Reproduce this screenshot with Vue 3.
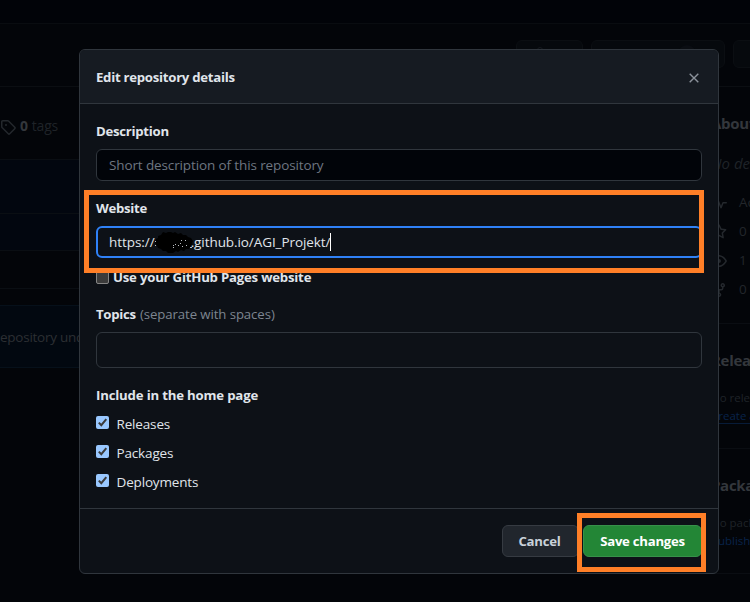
<script setup>
import { ref } from 'vue'

const options = ref(['Releases', 'Packages', 'Deployments'])
const stats = [
  { label: 'Activity', icon: 'M6 2c.306 0 .582.187.696.471L10 10.731l1.304-3.26A.751.751 0 0 1 12 7h3.25a.75.75 0 0 1 0 1.5h-2.742l-1.812 4.528a.751.751 0 0 1-1.392 0L6 4.77 4.696 8.03A.75.75 0 0 1 4 8.5H.75a.75.75 0 0 1 0-1.5h2.742l1.812-4.529A.751.751 0 0 1 6 2Z' },
  { label: '0 stars', icon: 'M8 .25a.75.75 0 0 1 .673.418l1.882 3.815 4.21.612a.75.75 0 0 1 .416 1.279l-3.046 2.97.719 4.192a.751.751 0 0 1-1.088.791L8 12.347l-3.766 1.98a.75.75 0 0 1-1.088-.79l.72-4.194L.818 6.374a.75.75 0 0 1 .416-1.28l4.21-.611L7.327.668A.75.75 0 0 1 8 .25Zm0 2.445L6.615 5.5a.75.75 0 0 1-.564.41l-3.097.45 2.24 2.184a.75.75 0 0 1 .216.664l-.528 3.084 2.769-1.456a.75.75 0 0 1 .698 0l2.77 1.456-.53-3.084a.75.75 0 0 1 .216-.664l2.24-2.183-3.096-.45a.75.75 0 0 1-.564-.41L8 2.694Z' },
  { label: '1 watching', icon: 'M8 2c1.981 0 3.671.992 4.933 2.078 1.27 1.091 2.187 2.345 2.637 3.023a1.62 1.62 0 0 1 0 1.798c-.45.678-1.367 1.932-2.637 3.023C11.67 13.008 9.981 14 8 14s-3.671-.992-4.933-2.078C1.797 10.83.88 9.576.43 8.898a1.62 1.62 0 0 1 0-1.798c.45-.677 1.367-1.931 2.637-3.022C4.33 2.992 6.019 2 8 2ZM1.679 7.932a.12.12 0 0 0 0 .136c.411.622 1.241 1.75 2.366 2.717C5.176 11.758 6.527 12.5 8 12.5s2.825-.742 3.955-1.715c1.124-.967 1.954-2.096 2.366-2.717a.12.12 0 0 0 0-.136c-.412-.621-1.242-1.75-2.366-2.717C10.824 4.242 9.473 3.5 8 3.5s-2.824.742-3.955 1.715c-1.124.967-1.954 2.096-2.366 2.717ZM8 10a2 2 0 1 1 0-4 2 2 0 0 1 0 4Z' },
  { label: '0 forks', icon: 'M5 5.372v.878c0 .414.336.75.75.75h4.5a.75.75 0 0 0 .75-.75v-.878a2.25 2.25 0 1 1 1.5 0v.878a2.25 2.25 0 0 1-2.25 2.25h-1.5v2.128a2.251 2.251 0 1 1-1.5 0V8.5h-1.5A2.25 2.25 0 0 1 3.5 6.25v-.878a2.25 2.25 0 1 1 1.5 0ZM5 3.25a.75.75 0 1 0-1.5 0 .75.75 0 0 0 1.5 0Zm6.75.75a.75.75 0 1 0 0-1.5.75.75 0 0 0 0 1.5Zm-3 8.75a.75.75 0 1 0-1.5 0 .75.75 0 0 0 1.5 0Z' },
]
</script>

<template>
  <div class="screen">
    <div class="page">
      <div class="topbar"></div>
      <div class="repo-head">
        <span class="pill pin"><svg width="16" height="16" viewBox="0 0 16 16"><circle cx="8" cy="3" r="2.5" /><path d="M8 6v8" /></svg></span>
        <span class="pill watch"><svg width="16" height="16" viewBox="0 0 16 16"><path d="M1 8c4-7 10-7 14 0-4 7-10 7-14 0z" /></svg><i class="count"></i></span>
        <span class="pill fork"><svg width="16" height="16" viewBox="0 0 16 16"><path :d="stats[3].icon" class="solid" /></svg></span>
      </div>
      <div class="columns">
        <div class="files">
          <div class="tags">
            <svg width="16" height="16" viewBox="0 0 16 16"><path class="solid" d="M1 7.775V2.75C1 1.784 1.784 1 2.75 1h5.025c.464 0 .91.184 1.238.513l6.25 6.25a1.75 1.75 0 0 1 0 2.474l-5.026 5.026a1.75 1.75 0 0 1-2.474 0l-6.25-6.25A1.752 1.752 0 0 1 1 7.775Zm1.5 0c0 .066.026.13.073.177l6.25 6.25a.25.25 0 0 0 .354 0l5.025-5.025a.25.25 0 0 0 0-.354l-6.25-6.25a.25.25 0 0 0-.177-.073H2.75a.25.25 0 0 0-.25.25ZM6 5a1 1 0 1 1 0 2 1 1 0 0 1 0-2Z" /></svg>
            <b>0</b><span>tags</span>
          </div>
          <div class="row commit"></div>
          <div class="row second"></div>
          <div class="row third"></div>
          <div class="row gap"></div>
          <div class="row notice">epository understand</div>
        </div>
        <aside class="side">
          <section class="about">
            <h2>About</h2>
            <p class="none">No description</p>
            <div v-for="s in stats" :key="s.label" class="stat">
              <svg width="16" height="16" viewBox="0 0 16 16"><path class="solid" :d="s.icon" /></svg><span>{{ s.label }}</span>
            </div>
          </section>
          <section class="releases">
            <h2>Releases</h2>
            <p>No releases</p>
            <a class="under">Create a new</a>
          </section>
          <section class="packages">
            <h2>Packages</h2>
            <p>No packages</p>
            <a>Publish your</a>
          </section>
        </aside>
      </div>
    </div>

    <div class="modal">
      <header class="modal-head">
        <h1>Edit repository details</h1>
        <svg width="10" height="10" viewBox="0 0 10 10"><path d="M.7.7l8.6 8.6M9.3.7L.7 9.3" /></svg>
      </header>
      <div class="modal-body">
        <div class="label">Description</div>
        <div class="input desc"><span>Short description of this repository</span></div>
        <div class="label l-web">Website</div>
        <div class="input url">
          <span class="t-http">https://</span>
          <svg class="scribble" width="38" height="22" viewBox="0 0 38 22">
            <path d="M0 12l1-4 2-1 0-2 3-1 2-3 3 1 2-1 3 0 2 1 2-1 3 2 3-1 2 2 3 0 2 2 3 1 2 3-1 2 1 3-3 1-1 2-3 0-2 2-3-1-3 2-2-1-3 2-2 0-3 0-2-2-3 0-2-2-3-1-1-2z" />
            <path class="specks" d="M0 10.500h1M0 14.500h1M18 14.500h1M20 13.500h1M25 12.500h1M23 14.500h1M26 9.500h1M30 9.500h1M31 14.500h1M27 15.500h1M18 16.500h1M35 16.500h2" />
          </svg>
          <span class="t-host">.github.io/AGI_Projekt/</span><i class="caret"></i>
        </div>
        <div class="use-pages"><i class="box"></i><span>Use your GitHub Pages website</span></div>
        <div class="label l-topics"><span>Topics</span><span class="t-sep">(separate with spaces)</span></div>
        <div class="input topics"></div>
        <div class="label l-inc">Include in the home page</div>
        <div class="options">
          <div v-for="o in options" :key="o" class="option">
            <svg width="13" height="13" viewBox="0 0 13 13"><rect width="13" height="13" rx="2" /><path d="M2.8 6.6l2.5 2.6 5-6" /></svg>
            <span>{{ o }}</span>
          </div>
        </div>
      </div>
      <footer class="modal-foot">
        <button class="btn cancel">Cancel</button>
        <button class="btn save">Save changes</button>
      </footer>
    </div>
    <div class="mark mark-website"></div>
    <div class="mark mark-save"></div>
  </div>
</template>

<style>
html, body { margin: 0; background: #030509; overflow: hidden; }
</style>

<style scoped>
* { box-sizing: border-box; }
.screen { position: relative; width: 750px; height: 602px; overflow: hidden; background: #030509; color: #e0e5eb; font: 13.5px/20px "Open Sans", "Noto Sans", sans-serif; }
svg { display: block; flex: none; }
h1, h2, p { margin: 0; }
span { white-space: nowrap; }

.page { display: flex; flex-direction: column; width: 750px; height: 602px; overflow: hidden; color: #1f2328; }
.topbar { height: 24px; flex: none; background: #010308; border-bottom: 1px solid #090c10; }
.repo-head { display: flex; flex: none; height: 63px; padding: 16px 0 0 516px; border-bottom: 1px solid #0b0e12; }
.pill { display: flex; flex: none; height: 28px; padding: 6px 15px; border: 1px solid #0b0e12; border-radius: 6px; background: #06090d; }
.pill svg { fill: none; stroke: #15191e; }
.pin { width: 67px; margin-right: 8px; }
.watch { width: 134px; margin-right: 8px; }
.fork { width: 80px; }
.count { width: 18px; height: 18px; margin: -2px 0 0 55px; border-radius: 9px; background: #0a0d12; }
.solid { fill: #24282d; stroke: none; }
.columns { display: flex; flex: 1; }
.files { width: 711px; flex: none; }
.tags { display: flex; align-items: center; height: 72px; padding-top: 8px; gap: 4px; color: #1f2328; font-size: 14px; letter-spacing: -.2px; }
.tags b, .tags span { margin-top: -2px; }
.tags b { color: #33373c; font-weight: 700; }
.row { border-top: 1px solid #0a0e13; }
.commit { height: 54px; background: #02060f; }
.second { height: 37px; background: #02060f; }
.third { height: 38px; }
.gap { height: 17px; }
.notice { height: 63px; padding-top: 21px; background: #020810; border-color: #06101a; border-bottom: 1px solid #06101a; color: #2c2f33; font-size: 13.5px; letter-spacing: -.25px; }
.side { flex: 1; overflow: hidden; white-space: nowrap; }
.side section { border-bottom: 1px solid #0a0d12; }
.side h2 { color: #33373c; font-size: 15px; line-height: 24px; font-weight: 700; letter-spacing: -.3px; }
.about { height: 237px; padding-top: 24px; }
.none { height: 24px; margin: 16px 0 12px; font-size: 15px; line-height: 24px; font-style: italic; color: #1f2328; }
.stat { display: flex; align-items: center; height: 29px; gap: 12px; color: #22262b; }
.stat svg { margin-top: 2px; }
.releases, .packages { height: 125px; padding-top: 24px; }
.side section:not(.about) p { margin-top: 17px; font-size: 11.5px; line-height: 18px; }
.side a { display: block; color: #08234a; font-size: 11.5px; line-height: 18px; }
.side .under { height: 17px; border-bottom: 1px solid #071b38; }

.modal { position: absolute; left: 79px; top: 49px; display: flex; flex-direction: column; width: 640px; height: 525px; border: 1px solid #30363d; border-radius: 6px; background: #0d1117; overflow: hidden; }
.modal-head { display: flex; flex: none; align-items: center; justify-content: space-between; height: 54px; padding: 1px 19px 0 16px; border-bottom: 1px solid #30363d; background: #161b22; }
.modal-head h1 { font-size: 13.2px; line-height: 20px; font-weight: 700; letter-spacing: -.27px; }
.modal-head svg { fill: none; stroke: #8b929b; stroke-width: 1.4; margin-top: 1px; }
.modal-body { flex: 1; padding: 17px 16px 0; }
.label { display: flex; height: 20px; font-weight: 700; font-size: 13.2px; letter-spacing: -.27px; }
.input { display: flex; align-items: center; height: 32px; padding: 0 12px; border: 1px solid #30363d; border-radius: 6px; }
.desc { margin-top: 8px; background: #010409; color: #6e7681; letter-spacing: -.12px; }
.l-web { margin-top: 17px; }
.url { margin-top: 8px; padding: 0 11px; border: 2px solid #2f81f7; }
.t-http { letter-spacing: -.05px; }
.t-host { letter-spacing: -.08px; }
.scribble { margin: -1px -2px 0 0; fill: #000; }
.specks { fill: none; stroke: #b8bcc2; stroke-width: 1; }
.caret { width: 1px; height: 18px; flex: none; background: #fff; }
.use-pages { display: flex; align-items: center; height: 20px; margin-top: 9px; gap: 4px; font-weight: 700; font-size: 13.2px; letter-spacing: -.21px; }
.box { width: 13px; height: 13px; flex: none; border: 1px solid #858585; border-radius: 2px; background: #3b3b3b; }
.l-topics { margin-top: 17px; gap: 4px; }
.t-sep { color: #7d8590; font-weight: 400; letter-spacing: -.08px; }
.topics { height: 36px; margin-top: 8px; }
.l-inc { margin-top: 17px; letter-spacing: -.18px; }
.options { display: flex; flex-direction: column; gap: 9px; margin-top: 9px; }
.option { display: flex; height: 20px; gap: 7.500px; letter-spacing: -.16px; }
.option svg { margin-top: 2px; }
.option rect { fill: #99c8ff; }
.option path { fill: none; stroke: #3b3b3b; stroke-width: 2; }
.modal-foot { display: flex; flex: none; justify-content: flex-end; gap: 4px; height: 65px; padding: 16px 16px 0; border-top: 1px solid #30363d; }
.btn { display: flex; align-items: center; justify-content: center; height: 32px; padding: 0; border: 1px solid #363b42; border-radius: 6px; background: #21262d; color: #c9d1d9; font: 700 13.2px/20px "Open Sans", "Noto Sans", sans-serif; letter-spacing: -.27px; }
.cancel { width: 77px; padding-right: 2px; }
.save { width: 119px; border-color: #37914a; background: #238636; color: #fff; }
.mark { position: absolute; border: 5px solid #ff7f27; }
.mark-website { left: 84px; top: 190px; width: 620px; height: 83px; }
.mark-save { left: 577px; top: 513px; width: 129px; height: 59px; }
</style>
